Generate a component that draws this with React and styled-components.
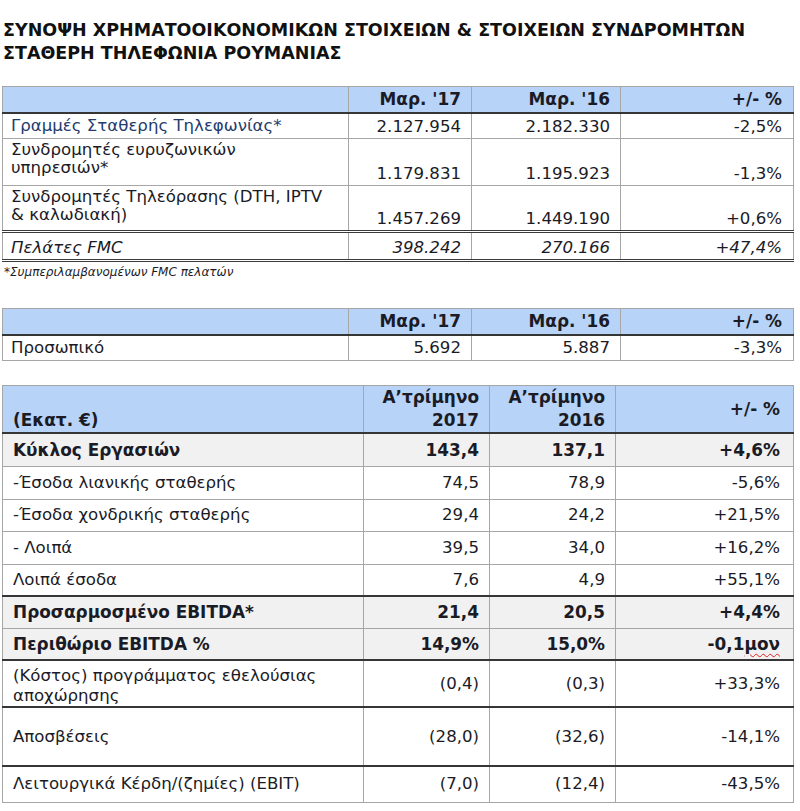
import React from "react";
import styled, { createGlobalStyle } from "styled-components";

const Global = createGlobalStyle`
  html, body { margin: 0; padding: 0; background: #ffffff; }
  body { font-family: "DejaVu Sans", Verdana, sans-serif; color: #1b1b26; }
`;

const Page = styled.div`
  width: 800px;
  padding: 19px 0 8px 2px;
  box-sizing: border-box;
`;

const Title = styled.h1`
  margin: 0 0 0 1px;
  font-size: 17.5px;
  line-height: 23px;
  font-weight: bold;
  color: #111111;
`;

const Table = styled.table`
  width: 791px;
  border-collapse: collapse;
  table-layout: fixed;
  margin-top: ${(p) => p.$top || 0}px;
  font-size: 16.6px;
`;

const borderFor = (k) =>
  k === "double" ? "3px double #3a3a3a" : k ? "2px solid #363636" : "1px solid #a6a6a6";

const Cell = styled.td`
  border: 1px solid #a6a6a6;
  border-bottom: ${(p) => borderFor(p.$thick)};
  padding: ${(p) => p.$pt || 0}px ${(p) => (p.$right ? p.$pr || 10 : 8)}px ${(p) => p.$pb || 0}px ${(p) => p.$pl || 8}px;
  height: ${(p) => p.$h}px;
  text-align: ${(p) => (p.$right ? "right" : "left")};
  vertical-align: ${(p) => p.$va || "middle"};
  font-weight: ${(p) => (p.$bold ? "bold" : "normal")};
  font-style: ${(p) => (p.$italic ? "italic" : "normal")};
  font-size: ${(p) => (p.$bold ? "16.9px" : "16.6px")};
  background: ${(p) => (p.$head ? "#b7d3f7" : p.$shade ? "#f1f1f1" : "#ffffff")};
  color: ${(p) => p.$color || "#1b1b26"};
  line-height: ${(p) => p.$lh || 20}px;
  box-sizing: border-box;
  overflow: hidden;
  white-space: nowrap;
`;

const Note = styled.div`
  font-size: 12px;
  font-style: italic;
  color: #1b1b26;
  margin: 3px 0 0 2px;
  height: 14px;
  line-height: 14px;
`;

const Squiggle = styled.span`
  text-decoration: underline wavy #e02020;
  text-decoration-thickness: 1px;
  text-underline-offset: 3px;
`;

const Cols1 = () => (
  <colgroup>
    <col style={{ width: 346 }} />
    <col style={{ width: 123 }} />
    <col style={{ width: 149 }} />
    <col style={{ width: 173 }} />
  </colgroup>
);

const Cols3 = () => (
  <colgroup>
    <col style={{ width: 361 }} />
    <col style={{ width: 126 }} />
    <col style={{ width: 126 }} />
    <col style={{ width: 178 }} />
  </colgroup>
);

const HeadRow = ({ a, b, c, h = 26 }) => (
  <tr>
    <Cell $head $h={h} $thick />
    <Cell $head $bold $right $h={h} $thick>{a}</Cell>
    <Cell $head $bold $right $h={h} $thick>{b}</Cell>
    <Cell $head $bold $right $pr={11} $h={h} $thick>{c}</Cell>
  </tr>
);

const subs = [
  { l: ["Γραμμές Σταθερής Τηλεφωνίας*"], a: "2.127.954", b: "2.182.330", c: "-2,5%", h: 26, color: "#243c6c" },
  { l: ["Συνδρομητές ευρυζωνικών", "υπηρεσιών*"], a: "1.179.831", b: "1.195.923", c: "-1,3%", h: 47 },
  { l: ["Συνδρομητές Τηλεόρασης (DTH, IPTV", "& καλωδιακή)"], a: "1.457.269", b: "1.449.190", c: "+0,6%", h: 46, thick: "double" },
  { l: ["Πελάτες FMC"], a: "398.242", b: "270.166", c: "+47,4%", h: 29, italic: true, thick: "double" },
];

const fin = [
  { l: "Κύκλος Εργασιών", a: "143,4", b: "137,1", c: "+4,6%", h: 33, bold: true, shade: true },
  { l: "-Έσοδα λιανικής σταθερής", a: "74,5", b: "78,9", c: "-5,6%", h: 33 },
  { l: "-Έσοδα χονδρικής σταθερής", a: "29,4", b: "24,2", c: "+21,5%", h: 32 },
  { l: "- Λοιπά", a: "39,5", b: "34,0", c: "+16,2%", h: 33 },
  { l: "Λοιπά έσοδα", a: "7,6", b: "4,9", c: "+55,1%", h: 32, thick: true },
  { l: "Προσαρμοσμένο EBITDA*", a: "21,4", b: "20,5", c: "+4,4%", h: 32, bold: true, shade: true },
  { l: "Περιθώριο EBITDA %", a: "14,9%", b: "15,0%", c: <>-0,1<Squiggle>μον</Squiggle></>, h: 32, bold: true, shade: true, thick: true },
  { l: <>(Κόστος) προγράμματος εθελούσιας<br />αποχώρησης</>, a: "(0,4)", b: "(0,3)", c: "+33,3%", h: 47, thick: true, pt: 5 },
  { l: "Αποσβέσεις", a: "(28,0)", b: "(32,6)", c: "-14,1%", h: 59, thick: true },
  { l: "Λειτουργικά Κέρδη/(ζημίες) (EBIT)", a: "(7,0)", b: "(12,4)", c: "-43,5%", h: 36 },
];

export default function App() {
  return (
    <>
      <Global />
      <Page>
        <Title>
          ΣΥΝΟΨΗ ΧΡΗΜΑΤΟΟΙΚΟΝΟΜΙΚΩΝ ΣΤΟΙΧΕΙΩΝ &amp; ΣΤΟΙΧΕΙΩΝ ΣΥΝΔΡΟΜΗΤΩΝ
          <br />
          ΣΤΑΘΕΡΗ ΤΗΛΕΦΩΝΙΑ ΡΟΥΜΑΝΙΑΣ
        </Title>

        <Table $top={21}>
          <Cols1 />
          <tbody>
            <HeadRow a="Μαρ. '17" b="Μαρ. '16" c="+/- %" />
            {subs.map((r) => {
              const multi = r.l.length > 1;
              return (
                <tr key={r.l[0]}>
                  <Cell
                    $h={r.h}
                    $va={multi ? "top" : "middle"}
                    $lh={multi ? 18 : 20}
                    $pt={multi ? 2 : r.italic ? 3 : 0}
                    $italic={r.italic}
                    $thick={r.thick}
                    $color={r.color}
                  >
                    {r.l.map((t, i) => (
                      <React.Fragment key={t}>
                        {i > 0 && <br />}
                        {t}
                      </React.Fragment>
                    ))}
                  </Cell>
                  <Cell $right $h={r.h} $va="bottom" $pb={1} $italic={r.italic} $thick={r.thick}>{r.a}</Cell>
                  <Cell $right $h={r.h} $va="bottom" $pb={1} $italic={r.italic} $thick={r.thick}>{r.b}</Cell>
                  <Cell $right $pr={11} $h={r.h} $va="bottom" $pb={1} $italic={r.italic} $thick={r.thick}>{r.c}</Cell>
                </tr>
              );
            })}
          </tbody>
        </Table>
        <Note>*Συμπεριλαμβανομένων FMC πελατών</Note>

        <Table $top={29}>
          <Cols1 />
          <tbody>
            <HeadRow a="Μαρ. '17" b="Μαρ. '16" c="+/- %" />
            <tr>
              <Cell $h={26}>Προσωπικό</Cell>
              <Cell $right $h={26}>5.692</Cell>
              <Cell $right $h={26}>5.887</Cell>
              <Cell $right $pr={11} $h={26}>-3,3%</Cell>
            </tr>
          </tbody>
        </Table>

        <Table $top={24}>
          <Cols3 />
          <tbody>
            <tr>
              <Cell $head $bold $h={46} $va="bottom" $lh={23} $pl={10} $thick>(Εκατ. €)</Cell>
              <Cell $head $bold $right $h={46} $lh={23} $thick>Α’τρίμηνο<br />2017</Cell>
              <Cell $head $bold $right $h={46} $lh={23} $thick>Α’τρίμηνο<br />2016</Cell>
              <Cell $head $bold $right $pr={13} $h={46} $thick>+/- %</Cell>
            </tr>
            {fin.map((r, i) => (
              <tr key={i}>
                <Cell $h={r.h} $pl={10} $pt={r.pt} $bold={r.bold} $shade={r.shade} $thick={r.thick}>{r.l}</Cell>
                <Cell $right $h={r.h} $bold={r.bold} $shade={r.shade} $thick={r.thick}>{r.a}</Cell>
                <Cell $right $h={r.h} $bold={r.bold} $shade={r.shade} $thick={r.thick}>{r.b}</Cell>
                <Cell $right $pr={13} $h={r.h} $bold={r.bold} $shade={r.shade} $thick={r.thick}>{r.c}</Cell>
              </tr>
            ))}
          </tbody>
        </Table>
      </Page>
    </>
  );
}
